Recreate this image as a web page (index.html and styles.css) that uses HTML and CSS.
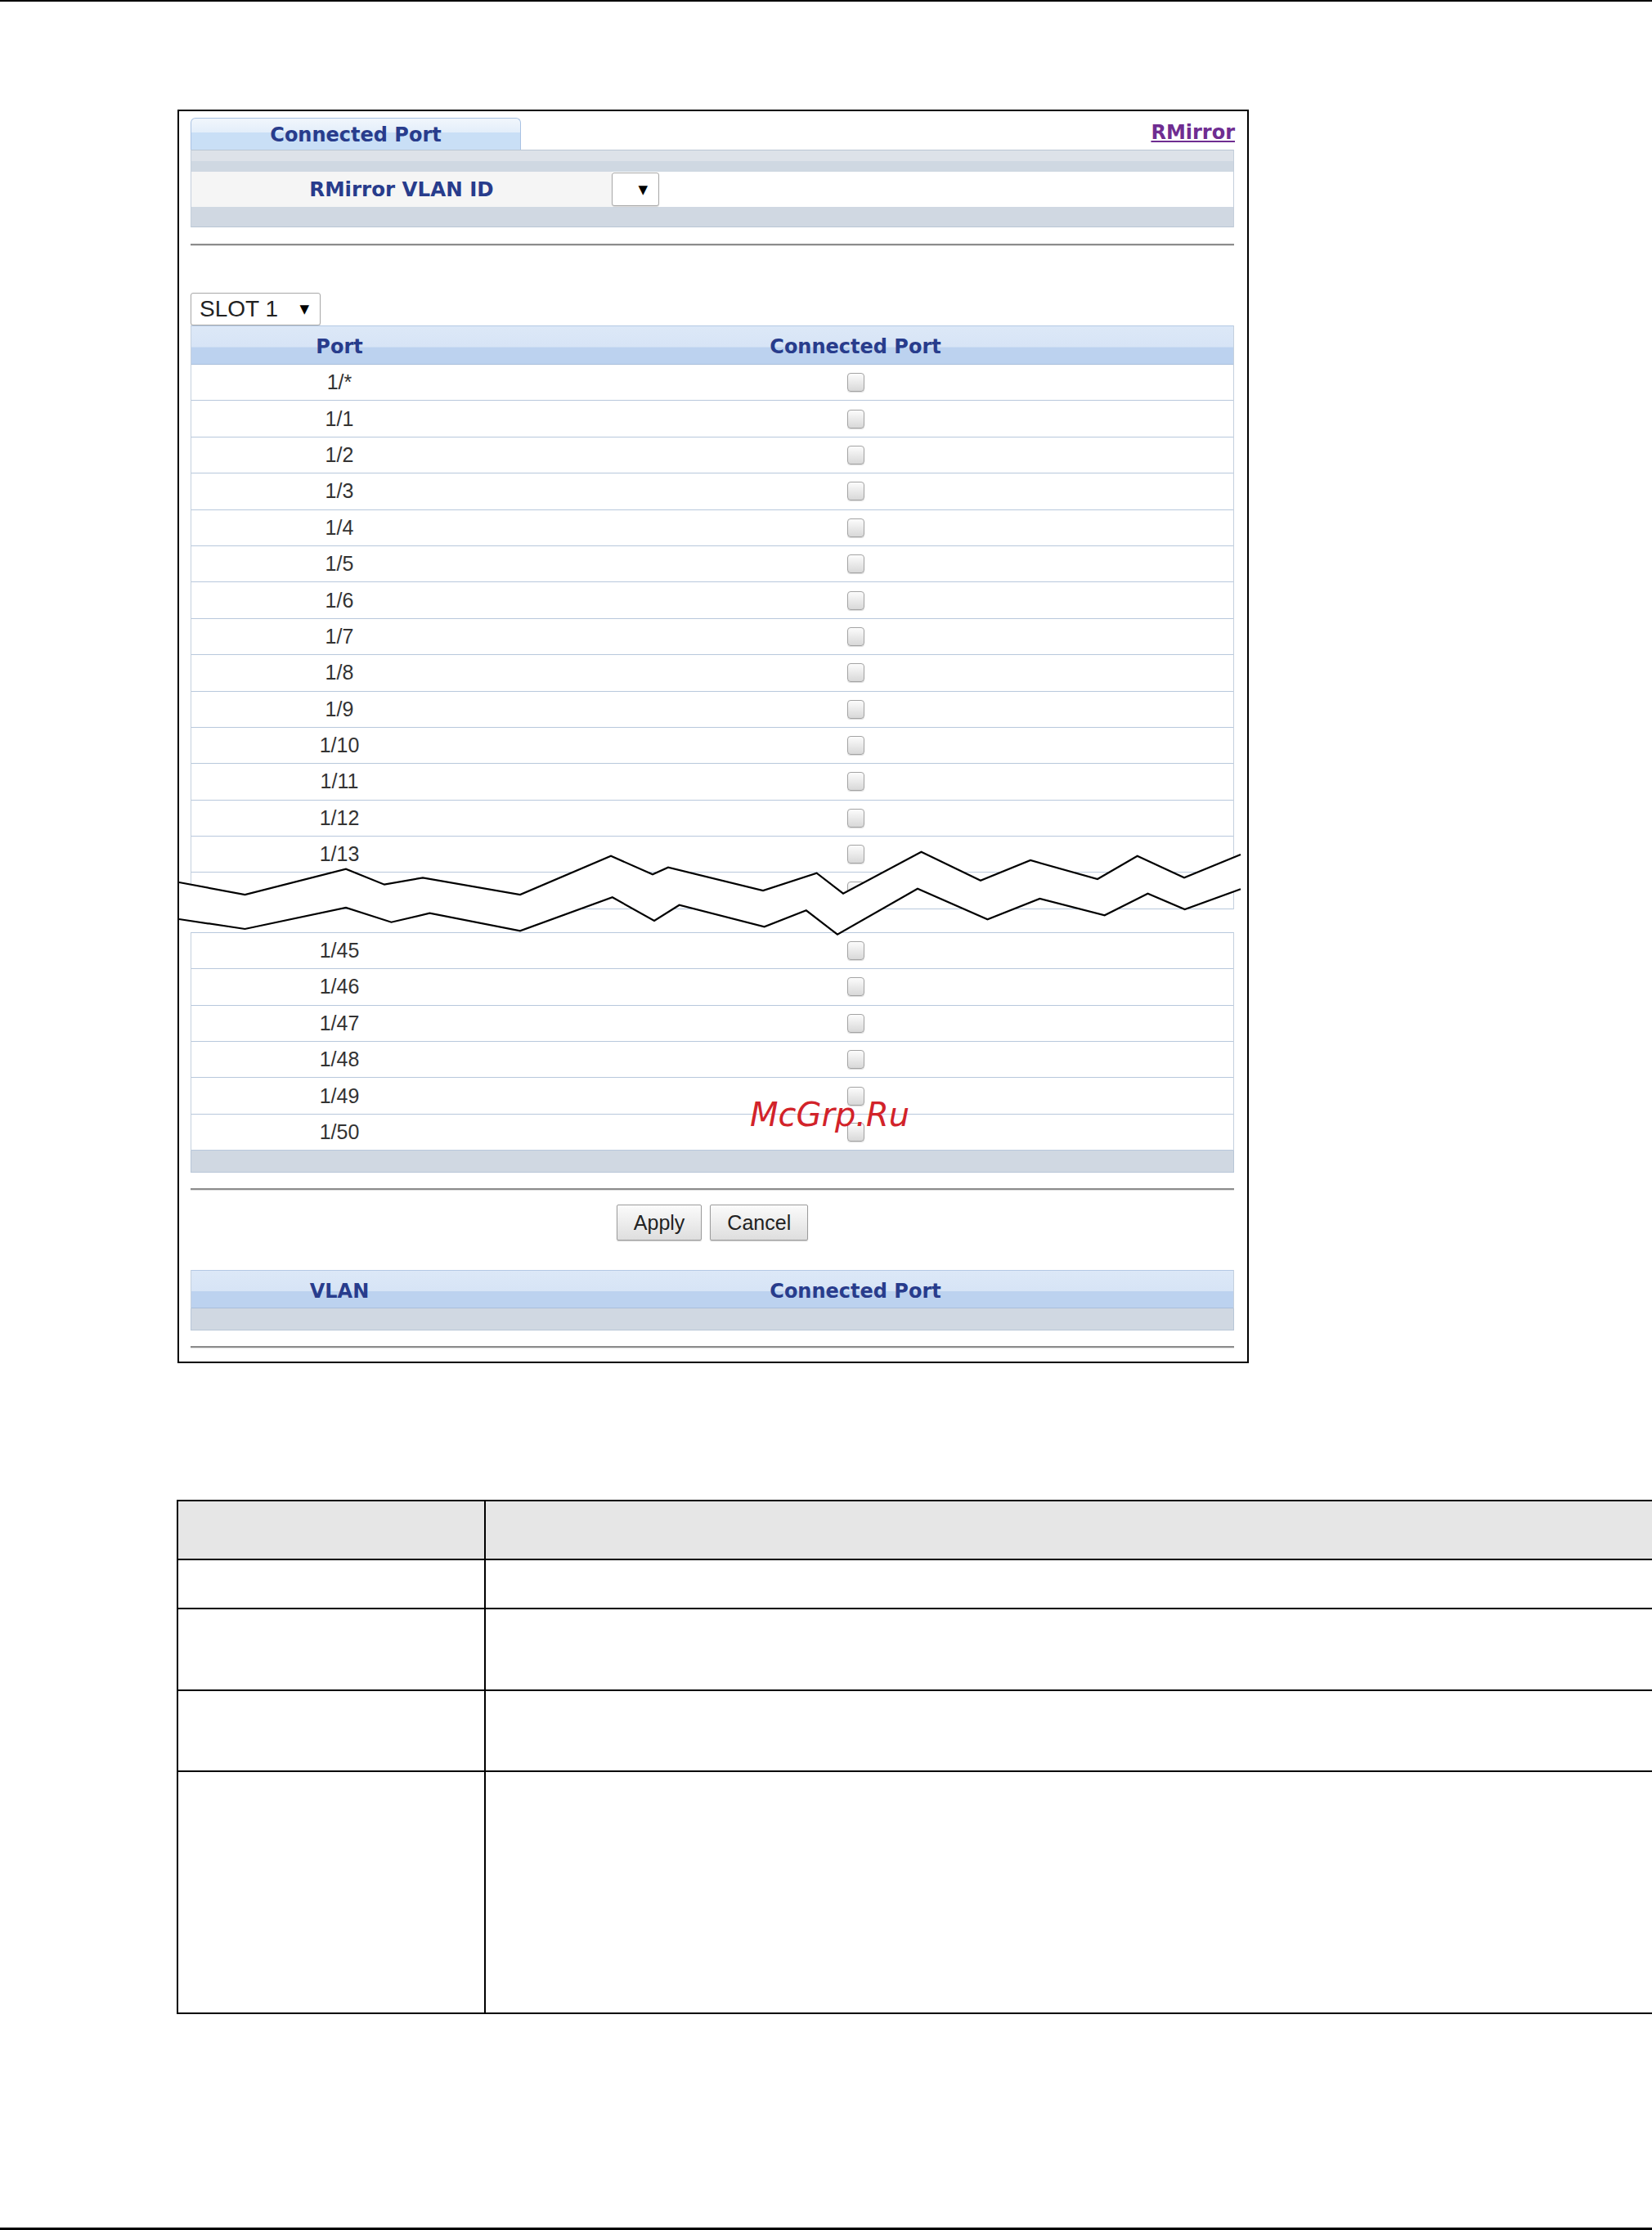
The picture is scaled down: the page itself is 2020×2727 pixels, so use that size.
FILE: index.html
```html
<!DOCTYPE html>
<html lang="en">
<head>
  <meta charset="UTF-8">
  <meta name="viewport" content="width=device-width, initial-scale=1.0">
  <title>Connected Port</title>
  <link rel="stylesheet" href="styles.css">
</head>
<body>
  <div class="page-rule"></div>

  <div class="shot">
    <div class="tabbar">
      <div class="tab">Connected Port</div>
      <a class="link" href="#">RMirror</a>
    </div>

    <div class="form-box">
      <div class="band band-top"></div>
      <div class="form-row">
        <div class="form-label">RMirror VLAN ID</div>
        <div class="form-value">
          <span class="select select-vlan"><span class="arrow">&#9660;</span></span>
        </div>
      </div>
      <div class="band band-bottom"></div>
    </div>

    <hr class="rule">

    <div class="select select-slot">SLOT 1<span class="arrow">&#9660;</span></div>

    <div class="grid">
      <div class="grid-head">
        <div class="col-a">Port</div>
        <div class="col-b">Connected Port</div>
      </div>
      <div class="grid-row"><div class="col-a">1/*</div><div class="col-b"><span class="check"></span></div></div>
      <div class="grid-row"><div class="col-a">1/1</div><div class="col-b"><span class="check"></span></div></div>
      <div class="grid-row"><div class="col-a">1/2</div><div class="col-b"><span class="check"></span></div></div>
      <div class="grid-row"><div class="col-a">1/3</div><div class="col-b"><span class="check"></span></div></div>
      <div class="grid-row"><div class="col-a">1/4</div><div class="col-b"><span class="check"></span></div></div>
      <div class="grid-row"><div class="col-a">1/5</div><div class="col-b"><span class="check"></span></div></div>
      <div class="grid-row"><div class="col-a">1/6</div><div class="col-b"><span class="check"></span></div></div>
      <div class="grid-row"><div class="col-a">1/7</div><div class="col-b"><span class="check"></span></div></div>
      <div class="grid-row"><div class="col-a">1/8</div><div class="col-b"><span class="check"></span></div></div>
      <div class="grid-row"><div class="col-a">1/9</div><div class="col-b"><span class="check"></span></div></div>
      <div class="grid-row"><div class="col-a">1/10</div><div class="col-b"><span class="check"></span></div></div>
      <div class="grid-row"><div class="col-a">1/11</div><div class="col-b"><span class="check"></span></div></div>
      <div class="grid-row"><div class="col-a">1/12</div><div class="col-b"><span class="check"></span></div></div>
      <div class="grid-row"><div class="col-a">1/13</div><div class="col-b"><span class="check"></span></div></div>
      <div class="grid-row"><div class="col-a">1/14</div><div class="col-b"><span class="check"></span></div></div>
    </div>

    <div class="grid grid-lower">
      <div class="grid-row"><div class="col-a">1/45</div><div class="col-b"><span class="check"></span></div></div>
      <div class="grid-row"><div class="col-a">1/46</div><div class="col-b"><span class="check"></span></div></div>
      <div class="grid-row"><div class="col-a">1/47</div><div class="col-b"><span class="check"></span></div></div>
      <div class="grid-row"><div class="col-a">1/48</div><div class="col-b"><span class="check"></span></div></div>
      <div class="grid-row"><div class="col-a">1/49</div><div class="col-b"><span class="check"></span></div></div>
      <div class="grid-row"><div class="col-a">1/50</div><div class="col-b"><span class="check"></span></div></div>
    </div>
    <div class="grid-foot"></div>

    <!-- torn edge: rows 1/15 .. 1/44 are cut out of the picture -->
    <svg class="break" width="1310" height="115" viewBox="0 0 1310 115">
      <polygon fill="#fff" points="2,44 82.5,59 206,27.7 253,46.7 300,38.3 419,59 530,11.7 581,34.3 600,25.7 716,54 781.6,32.7 814,57.7 909.5,6.7 982,41.7 1043,17 1125,40 1173.7,11.7 1231,38.3 1300,10 1300,52.3 1231.7,77 1186.5,57.7 1133.7,84.3 1054.4,64 990.5,89.3 905,51.7 807,107.7 768.8,78.3 717.6,98.3 613.6,71.7 583,91 531.8,62.3 419,103.3 308.4,81.7 261.5,92.7 206,75 82.5,101 2,89"/>
      <polyline fill="none" stroke="#000" stroke-width="2.2" points="2,44 82.5,59 206,27.7 253,46.7 300,38.3 419,59 530,11.7 581,34.3 600,25.7 716,54 781.6,32.7 814,57.7 909.5,6.7 982,41.7 1043,17 1125,40 1173.7,11.7 1231,38.3 1300,10"/>
      <polyline fill="none" stroke="#000" stroke-width="2.2" points="2,89 82.5,101 206,75 261.5,92.7 308.4,81.7 419,103.3 531.8,62.3 583,91 613.6,71.7 717.6,98.3 768.8,78.3 807,107.7 905,51.7 990.5,89.3 1054.4,64 1133.7,84.3 1186.5,57.7 1231.7,77 1300,52.3"/>
    </svg>

    <span class="watermark">McGrp.Ru</span>

    <hr class="rule rule-tight">

    <div class="actions">
      <button class="btn">Apply</button>
      <button class="btn">Cancel</button>
    </div>

    <div class="grid grid-vlan">
      <div class="grid-head">
        <div class="col-a">VLAN</div>
        <div class="col-b">Connected Port</div>
      </div>
    </div>
    <div class="grid-foot"></div>

    <hr class="rule rule-tight">
  </div>

  <div class="doc">
    <div class="doc-row doc-head"><div class="doc-cell"></div><div class="doc-cell"></div></div>
    <div class="doc-row doc-h60"><div class="doc-cell"></div><div class="doc-cell"></div></div>
    <div class="doc-row doc-h100"><div class="doc-cell"></div><div class="doc-cell"></div></div>
    <div class="doc-row doc-h99"><div class="doc-cell"></div><div class="doc-cell"></div></div>
    <div class="doc-row doc-h296"><div class="doc-cell"></div><div class="doc-cell"></div></div>
  </div>

  <div class="page-rule page-rule-bottom"></div>
</body>
</html>
```

FILE: styles.css
```css
html, body {
  overflow: hidden;
}
body {
  margin: 0;
  width: 2020px;
  height: 2727px;
  background-color: #fff;
  font-family: "Liberation Sans", Arial, sans-serif;
  color: #333;
}
.page-rule {
  height: 2px;
  background-color: #000;
}
.page-rule-bottom {
  height: 3px;
  margin-top: 261px;
}

/* screenshot panel */
.shot {
  position: relative;
  box-sizing: border-box;
  width: 1310px;
  margin: 132px 0 0 217px;
  padding: 8px 16px 16px 14px;
  border: 2px solid #000;
}
.tabbar {
  display: flex;
  justify-content: space-between;
  align-items: center;
}
.tab {
  box-sizing: border-box;
  width: 404px;
  height: 39px;
  display: flex;
  align-items: center;
  justify-content: center;
  padding-top: 2px;
  border: 1px solid #a9c2e3;
  border-bottom: none;
  border-radius: 6px 6px 0 0;
  background: linear-gradient(#f1f6fc 0%, #e3eefa 45%, #c9dff6 46%, #c9dff6 100%);
  font-family: "DejaVu Sans", Verdana, sans-serif;
  font-weight: bold;
  font-size: 24px;
  color: #283c8c;
}
.link {
  margin: 0 -1px 4px 0;
  font-family: "DejaVu Sans", Verdana, sans-serif;
  font-weight: bold;
  font-size: 24px;
  color: #6f2d91;
  text-decoration: underline;
}

.form-box {
  border-left: 1px solid #c3cedb;
  border-right: 1px solid #c3cedb;
}
.band {
  box-sizing: border-box;
  background-color: #d0d8e2;
}
.band-top {
  height: 27px;
  border-top: 1px solid #bac6d4;
  background: linear-gradient(#dde2e9 50%, #cfd8e2 50%);
}
.band-bottom {
  height: 25px;
  border-bottom: 1px solid #b9c5d5;
}
.form-row {
  display: flex;
  height: 43px;
}
.form-label {
  width: 514px;
  display: flex;
  align-items: center;
  justify-content: center;
  background-color: #f5f5f5;
  font-family: "DejaVu Sans", Verdana, sans-serif;
  font-weight: bold;
  font-size: 24.5px;
  color: #283c8c;
}
.form-value {
  flex: 1;
  display: flex;
  align-items: center;
  background-color: #fff;
}

.select {
  box-sizing: border-box;
  display: flex;
  align-items: center;
  border: 1px solid #a8a8a8;
  border-radius: 3px;
  background-color: #fff;
  box-shadow: 0 1px 1px rgba(0, 0, 0, 0.15);
}
.arrow {
  margin-left: auto;
  font-family: "DejaVu Sans", sans-serif;
  font-size: 15px;
  color: #000;
}
.select-vlan {
  width: 58px;
  height: 41px;
  padding-right: 13px;
}
.select-slot {
  width: 159px;
  height: 40px;
  margin-top: 57px;
  padding: 0 13px 0 10px;
  font-size: 28px;
  color: #222;
}

.rule {
  height: 0;
  margin: 20px 0 0;
  border: none;
  border-top: 2px solid #8c8c8c;
  border-bottom: 1px solid #e0e0e0;
}
.rule-tight {
  margin-top: 19px;
}

/* port table */
.grid {
  border-left: 1px solid #c4d0de;
  border-right: 1px solid #c4d0de;
}
.grid-head {
  box-sizing: border-box;
  display: flex;
  height: 48px;
  padding-top: 4px;
  border-top: 1px solid #b4c8e4;
  border-bottom: 1px solid #a9bedb;
  background: linear-gradient(#dce8f7 0%, #d7e4f6 55%, #bcd2ef 56%, #bcd2ef 100%);
  font-family: "DejaVu Sans", Verdana, sans-serif;
  font-weight: bold;
  font-size: 24px;
  color: #283c8c;
}
.grid-vlan {
  margin-top: 36px;
}
.grid-vlan .grid-head {
  height: 47px;
}
.grid-row {
  box-sizing: border-box;
  display: flex;
  height: 44.4px;
  border-bottom: 1px solid #b8c8dc;
  background-color: #fff;
  font-size: 25px;
}
.col-a {
  width: 362px;
  display: flex;
  align-items: center;
  justify-content: center;
}
.col-b {
  flex: 1;
  display: flex;
  align-items: center;
  justify-content: center;
  padding-right: 12px;
}
.grid-lower {
  margin-top: 28px;
  border-top: 1px solid #b8c8dc;
}
.grid-foot {
  box-sizing: border-box;
  height: 27px;
  border: 1px solid #b8c6d7;
  border-top: none;
  background-color: #d0d8e2;
}
.check {
  box-sizing: border-box;
  width: 21px;
  height: 23px;
  border: 1px solid #a3a3a3;
  border-radius: 4px;
  background: linear-gradient(#fcfcfc, #d8d8d8);
  box-shadow: 0 1px 1px rgba(0, 0, 0, 0.15);
}

.break {
  position: absolute;
  left: -2px;
  top: 899px;
}
.watermark {
  position: absolute;
  left: 698px;
  top: 1207px;
  font-family: "DejaVu Sans", Verdana, sans-serif;
  font-style: italic;
  font-size: 40px;
  line-height: 1;
  color: #d2232a;
}

.actions {
  display: flex;
  justify-content: center;
  gap: 10px;
  margin-top: 17px;
}
.btn {
  box-sizing: border-box;
  height: 44px;
  padding: 0 20px;
  border: 1px solid #9c9c9c;
  border-radius: 2px;
  background: linear-gradient(#fbfbfb, #dedede);
  box-shadow: 0 1px 1px rgba(0, 0, 0, 0.2);
  font-family: "Liberation Sans", Arial, sans-serif;
  font-size: 25px;
  color: #222;
}

/* field description table below the screenshot */
.doc {
  width: 1814px;
  margin: 167px 0 0 216px;
  border-top: 2px solid #000;
  border-left: 2px solid #000;
}
.doc-row {
  display: grid;
  grid-template-columns: 376px 1fr;
}
.doc-cell {
  border-right: 2px solid #000;
  border-bottom: 2px solid #000;
}
.doc-head {
  height: 72px;
  background-color: #e6e6e6;
}
.doc-h60 {
  height: 60px;
}
.doc-h100 {
  height: 100px;
}
.doc-h99 {
  height: 99px;
}
.doc-h296 {
  height: 296px;
}
```
